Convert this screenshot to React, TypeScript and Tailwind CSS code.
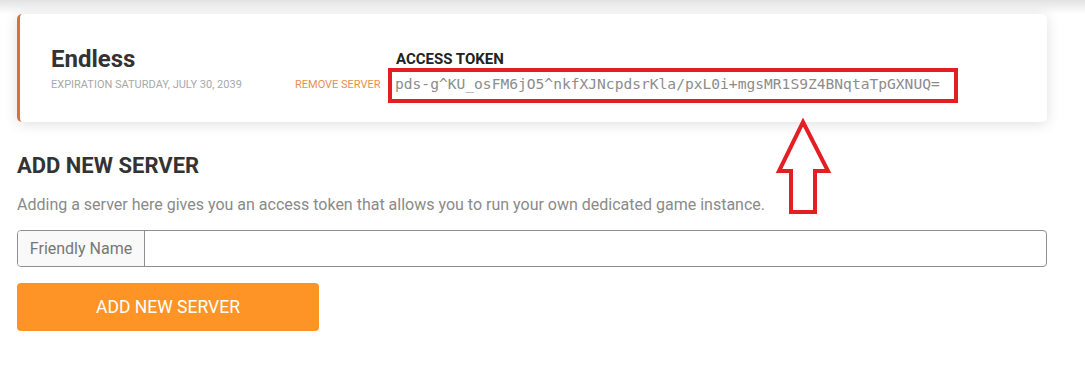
import React from 'react';

const TOKEN = 'pds-g^KU_osFM6jO5^nkfXJNcpdsrKla/pxL0i+mgsMR1S9Z4BNqtaTpGXNUQ=';

// annotation arrow pointing at the token box
const UpArrow = () => (
  <svg
    className="absolute left-[775px] top-[118px]"
    width="58"
    height="98"
    viewBox="775 118 58 98"
    fill="none"
  >
    <polygon
      points="803,122 828,171 815,171 815,212 791,212 791,171 779,171"
      stroke="#e31e24"
      strokeWidth="4"
      strokeLinejoin="miter"
    />
  </svg>
);

const ServerCard = () => (
  <div className="mx-[17px] flex h-[108px] w-[1030px] rounded-[5px] border-l-[3px] border-[#e06c3c] bg-white pl-[31px] shadow-[0_2px_14px_rgba(0,0,0,0.13)]">
    {/* nombre + expiración */}
    <div className="flex w-[337px] flex-col pt-[31px]">
      <div className="text-[24px] font-bold leading-[28px] text-[#333]">Endless</div>
      <div className="mt-[5px] flex text-[11px] uppercase leading-[13px]">
        <span className="w-[244px] text-[#a8a8a8]">Expiration Saturday, July 30, 2039</span>
        <span className="cursor-pointer text-[#e8904c]">Remove Server</span>
      </div>
    </div>

    {/* token */}
    <div className="flex flex-col pt-[37px]">
      <div className="ml-[8px] text-[15px] font-bold uppercase leading-[17px] text-[#222]">
        Access Token
      </div>
      <div className="h-[35px] w-[570px] border-4 border-[#e31e24] pl-[3px]">
        <span className="font-['DejaVu_Sans_Mono',monospace] text-[14.6px] leading-[15px] text-[#8c8c8c]">
          {TOKEN}
        </span>
      </div>
    </div>
  </div>
);

export default function App() {
  return (
    <div className="relative h-[371px] w-full overflow-hidden bg-white font-['Roboto',sans-serif]">
      <div className="h-[14px] bg-linear-to-b from-[#e2e2e2] to-white" />
      <ServerCard />

      <section className="px-[17px]">
        <h2 className="mt-[31px] text-[22px] font-bold leading-[25px] text-[#333]">ADD NEW SERVER</h2>
        <p className="mt-[16px] text-[16px] leading-[21px] text-[#8a8a8a]">
          Adding a server here gives you an access token that allows you to run your own dedicated game instance.
        </p>

        <div className="mt-[15px] flex h-[37px] w-[1030px] overflow-hidden rounded-[4px] border border-[#8f8f8f]">
          <span className="flex w-[127px] items-center justify-center border-r border-[#8f8f8f] bg-[#f9f9f9] text-[16px] text-[#777]">
            Friendly Name
          </span>
          <input className="flex-1 px-3 text-[16px] outline-none" />
        </div>

        <button className="mt-[16px] h-[48px] w-[302px] rounded-[4px] bg-[#fe9426] text-[17.5px] uppercase text-white">
          Add New Server
        </button>
      </section>

      <UpArrow />
    </div>
  );
}
